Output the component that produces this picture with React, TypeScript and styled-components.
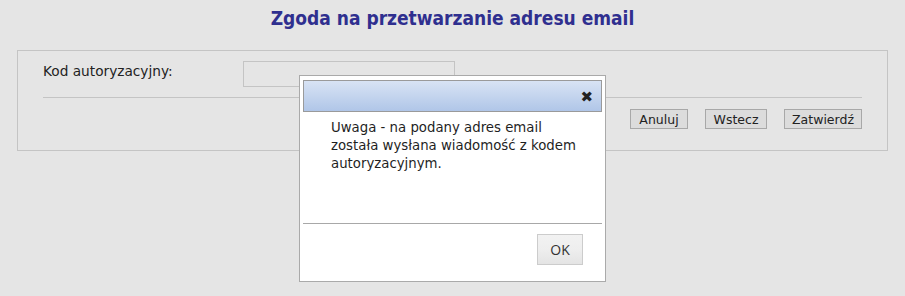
import React from "react";
import styled, { createGlobalStyle } from "styled-components";

const Global = createGlobalStyle`
  html, body { margin: 0; padding: 0; background: #e5e5e5; }
  body { font-family: "DejaVu Sans", Verdana, sans-serif; font-size: 13px; color: #222; }
`;

const Page = styled.div`
  position: relative;
  width: 905px;
  height: 296px;
  overflow: hidden;
  padding-top: 7px;
  box-sizing: border-box;
`;

const Title = styled.h1`
  margin: 0;
  text-align: center;
  font-family: "DejaVu Sans Condensed", "DejaVu Sans", Verdana, sans-serif;
  font-stretch: condensed;
  font-weight: bold;
  font-size: 19px;
  line-height: 23px;
  color: #2f2f8f;
`;

const Panel = styled.div`
  margin: 20px 17px 0 17px;
  height: 101px;
  box-sizing: border-box;
  border: 1px solid #c4c4c4;
  padding: 10px 25px 0 25px;
`;

const FieldRow = styled.div`
  display: grid;
  grid-template-columns: 200px 212px;
  align-items: start;
  height: 36px;
  border-bottom: 1px solid #c4c4c4;
`;

const Label = styled.label`
  padding-top: 2px;
  font-size: 13.7px;
  color: #222;
`;

const Input = styled.input`
  box-sizing: border-box;
  width: 212px;
  height: 26px;
  background: #e5e5e5;
  border: 1px solid #c4c4c4;
  outline: none;
`;

const Actions = styled.div`
  display: flex;
  justify-content: flex-end;
  gap: 17px;
  padding-top: 11px;
`;

const Btn = styled.button<{ $w: number }>`
  height: 20px;
  box-sizing: border-box;
  padding: 0;
  width: ${(p) => p.$w}px;
  background: #dcdcdc;
  border: 1px solid #a8a8a8;
  font-family: "DejaVu Sans", Verdana, sans-serif;
  font-size: 12.5px;
  color: #222;
`;

const Modal = styled.div`
  position: absolute;
  left: 299px;
  top: 75px;
  width: 307px;
  height: 207px;
  box-sizing: border-box;
  background: #fff;
  border: 1px solid #aaaaaa;
  padding: 4px 3px 0 3px;
  display: flex;
  flex-direction: column;
`;

const ModalHeader = styled.div`
  height: 32px;
  box-sizing: border-box;
  border: 1px solid #9a9a9a;
  background: linear-gradient(#d8e3f4, #b0c6e8);
  display: flex;
  justify-content: flex-end;
  align-items: center;
  padding-right: 8px;
`;

const Close = styled.span`
  font-family: "DejaVu Sans", sans-serif;
  font-weight: bold;
  font-size: 15px;
  color: #222;
  line-height: 1;
  margin-top: 3px;
`;

const ModalBody = styled.div`
  height: 112px;
  box-sizing: border-box;
  padding: 7px 18px 0 28px;
  font-size: 13.3px;
  line-height: 18px;
  color: #1f1f1f;
  border-bottom: 1px solid #a8a8a8;
`;

const ModalFooter = styled.div`
  display: flex;
  justify-content: flex-end;
  padding: 10px 19px 0 0;
`;

const OkBtn = styled.button`
  width: 46px;
  height: 31px;
  box-sizing: border-box;
  border: 1px solid #cccccc;
  background: linear-gradient(#f2f2f2 0%, #eeeeee 50%, #e4e4e4 100%);
  font-family: "Open Sans", sans-serif;
  font-size: 14px;
  color: #333;
  padding: 0;
`;

export default function App() {
  return (
    <Page>
      <Global />
      <Title>Zgoda na przetwarzanie adresu email</Title>
      <Panel>
        <FieldRow>
          <Label>Kod autoryzacyjny:</Label>
          <Input />
        </FieldRow>
        <Actions>
          <Btn $w={58}>Anuluj</Btn>
          <Btn $w={62}>Wstecz</Btn>
          <Btn $w={78}>Zatwierdź</Btn>
        </Actions>
      </Panel>
      <Modal>
        <ModalHeader>
          <Close>✖</Close>
        </ModalHeader>
        <ModalBody>
          Uwaga - na podany adres email została wysłana wiadomość z kodem autoryzacyjnym.
        </ModalBody>
        <ModalFooter>
          <OkBtn>OK</OkBtn>
        </ModalFooter>
      </Modal>
    </Page>
  );
}
